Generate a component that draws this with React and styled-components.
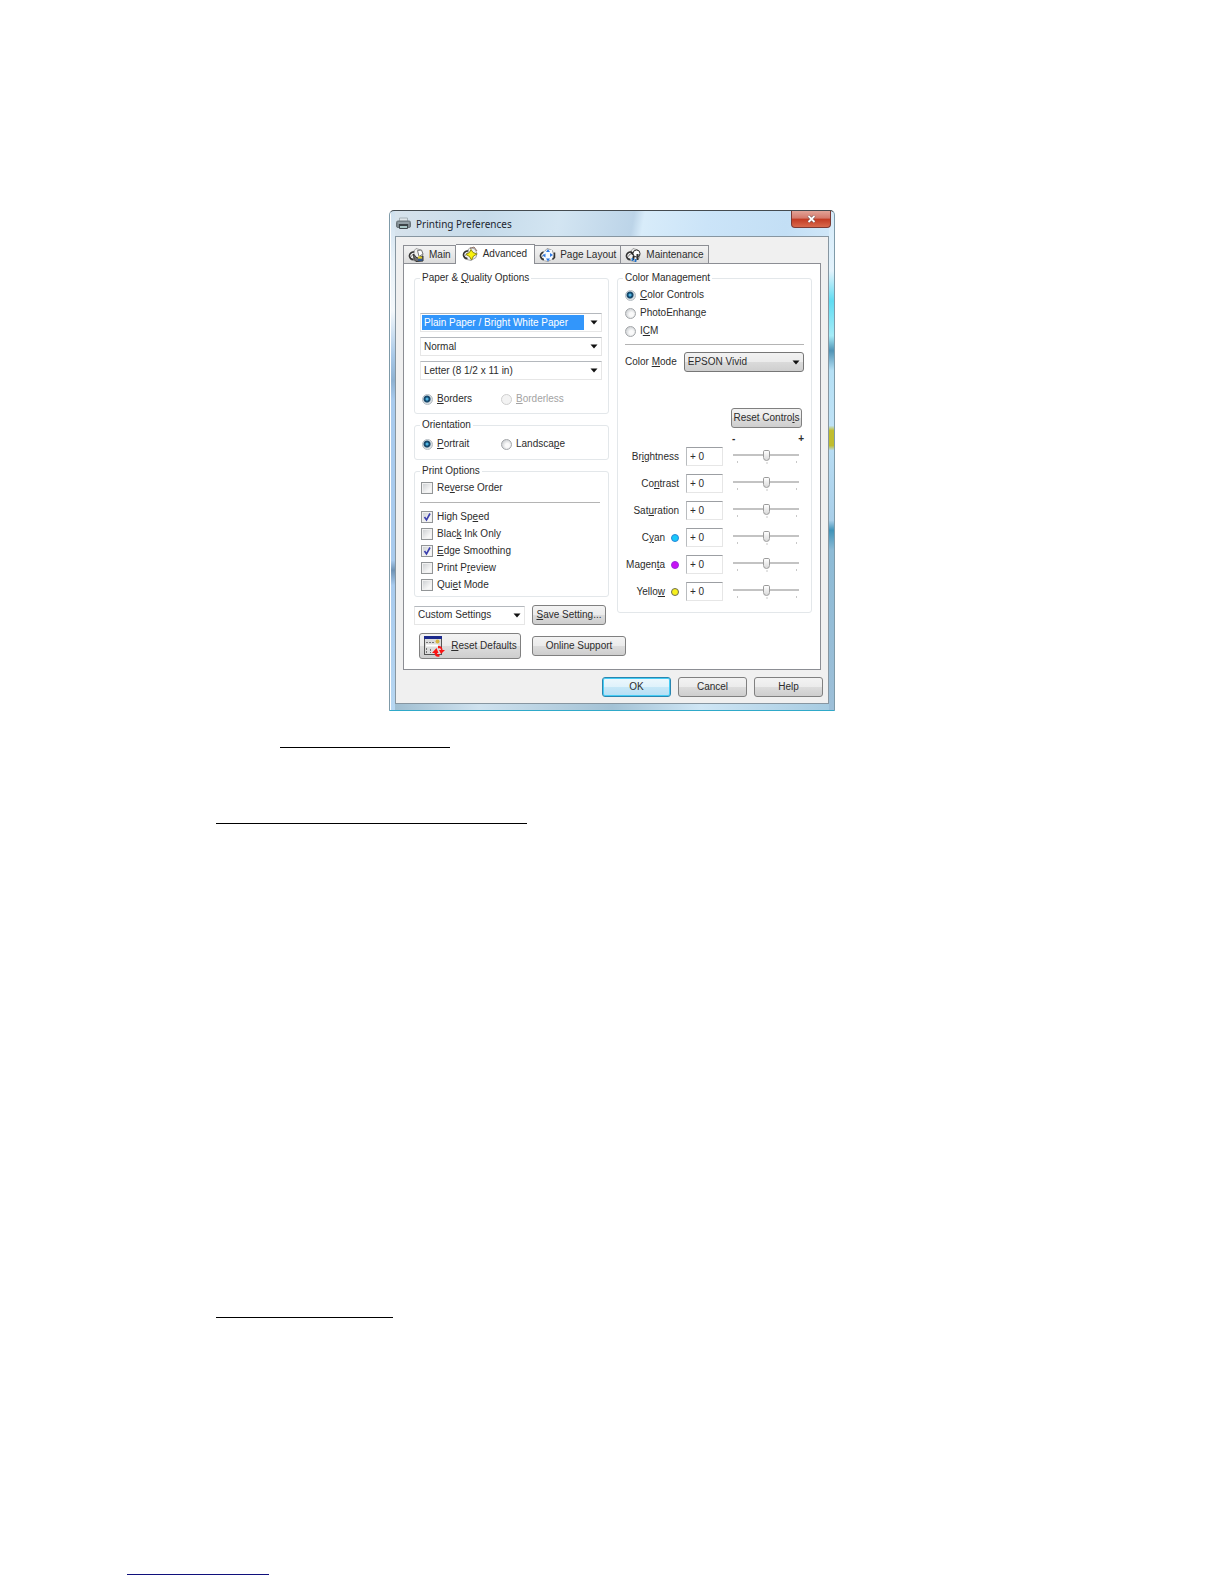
import React, { useState } from 'react';
import styled, { createGlobalStyle, css } from 'styled-components';

const GlobalStyle = createGlobalStyle`
  *, *::before, *::after {
    box-sizing: border-box;
  }
  body {
    margin: 0;
    background: #fff;
  }
  button, input, select {
    font: inherit;
    color: inherit;
    margin: 0;
  }
`;

const Page = styled.main`
  padding: 210px 0 8px;
  font-family: 'Liberation Sans', Arial, sans-serif;
  font-size: 10px;
  line-height: 14px;
  color: #2c2c2c;
`;

const Rule = styled.hr`
  width: ${({ $width }) => $width}px;
  height: 1px;
  margin: ${({ $top }) => $top}px 0 0 ${({ $left }) => $left}px;
  border: 0;
  background: ${({ $color }) => $color || '#000'};
`;

/* window frame */

const Dialog = styled.section`
  max-width: 446px;
  margin: 0 auto;
  padding: 0 5px 6px;
  border: 1px solid #7f9aa8;
  border-top-color: #444b50;
  border-bottom-color: #2fa9c9;
  border-radius: 5px 5px 1px 1px;
  background:
    linear-gradient(#fff, #fff) left top / 1px 100% no-repeat,
    linear-gradient(
      180deg,
      #d5ebfa 0%, #e4f3fc 12%, #5fdcf2 18%, #a5ecf8 25%, #4f93b5 28%, #b5e0f5 32%,
      #bfe2f6 43%, #c0bd2e 44%, #c0bd2e 47%, #b7dcf3 48%, #a9cfe9 62%, #3f93b8 64%,
      #8dbbd6 68%, #9dbfd8 100%
    ) right top / 5px 100% no-repeat,
    linear-gradient(
      180deg,
      #cfe0ee 0%, #e8f1f8 10%, #f4f8fb 20%, #a9c9e8 29%, #8fb2d2 34%, #a9cbee 38%,
      #a9cbee 70%, #6f93b5 72%, #a9cbee 75%, #b7d7f2 100%
    ) left top / 5px 100% no-repeat,
    linear-gradient(90deg, #9dbccf, #cfe2ef 20%, #a3c2d5 50%, #cfe6f5 70%, #a5cae0) left bottom / 100% 6px no-repeat,
    linear-gradient(
      100deg,
      #d8e3ec 0%, #c6dbea 18%, #d3e5f2 32%, #bcd4e8 46%, #d8ecfa 48%, #cbe4f8 60%, #c3dff5 75%,
      #d6ebfa 88%, #c3ddf0 100%
    );
`;

const TitleBar = styled.header`
  display: flex;
  align-items: center;
  gap: 5px;
  height: 25px;
  margin-right: -2px;
  padding-left: 1px;
`;

const Title = styled.h1`
  flex: 1;
  margin: 0;
  font-family: 'Noto Sans', 'Liberation Sans', sans-serif;
  font-size: 10px;
  font-weight: 400;
  line-height: 16px;
  color: #1c2630;
`;

const CloseButton = styled.button`
  display: flex;
  align-items: center;
  justify-content: center;
  align-self: flex-start;
  width: 40px;
  height: 17px;
  padding: 0;
  border: 1px solid #7c3a34;
  border-top: 0;
  border-radius: 0 0 4px 4px;
  background: linear-gradient(#e2a397, #d4796b 45%, #c23a22 50%, #d9694c);
`;

const Client = styled.div`
  padding: 7px 7px 6px;
  border: 1px solid #8796a1;
  background: #f0f0f0;
`;

/* tabs */

const TabList = styled.div`
  display: flex;
  align-items: flex-end;
  height: 19px;
`;

const Tab = styled.button`
  display: flex;
  align-items: center;
  gap: 4px;
  height: 18px;
  padding: 0 4px 0 4px;
  border: 1px solid #8c8e94;
  border-bottom: 0;
  border-left-width: ${({ $first }) => ($first ? 1 : 0)}px;
  background: linear-gradient(#f3f3f3, #e9e9e9 50%, #dcdcdc);
  white-space: nowrap;

  ${({ $active }) =>
    $active &&
    css`
      height: 20px;
      margin-bottom: -1px;
      padding: 0 7px 2px 6px;
      background: #fff;
      z-index: 1;
    `}
`;

const TabPanel = styled.div`
  padding: 7px 8px 10px 10px;
  border: 1px solid #8c8e94;
  background: #fff;
`;

const Columns = styled.div`
  display: grid;
  grid-template-columns: 1fr 1fr;
  align-items: start;
  gap: 8px;
`;

const Column = styled.div`
  display: flex;
  flex-direction: column;
  gap: 4px;
  min-width: 0;
`;

const Group = styled.fieldset`
  min-width: 0;
  margin: 0;
  padding: ${({ $pad }) => $pad};
  border: 1px solid #e3e7ea;
  border-radius: 3px;
`;

const Legend = styled.legend`
  padding: 0 2px;
`;

const Divider = styled.hr`
  height: 1px;
  margin: ${({ $margin }) => $margin};
  border: 0;
  background: #b4b4b4;
`;

/* drop-downs */

const SelectBox = styled.div`
  display: grid;
  align-items: center;
  flex: ${({ $width }) => ($width ? `0 0 ${$width}px` : '1')};

  > * {
    grid-area: 1 / 1;
  }
  > svg {
    justify-self: end;
    margin-right: 4px;
    pointer-events: none;
  }
`;

const SelectInput = styled.select`
  appearance: none;
  width: 100%;
  height: 19px;
  padding: 0 18px 0 3px;
  border: 1px solid #e6e6e6;
  border-top-color: #b4b8bd;
  border-radius: 0;
  background: #fff;
  outline: 0;

  ${({ $look }) =>
    $look === 'selected' &&
    css`
      color: #fff;
      background: linear-gradient(#3296fb, #3296fb) 1px 1px / calc(100% - 18px) calc(100% - 2px) no-repeat, #fff;
    `}
  ${({ $look }) =>
    $look === 'button' &&
    css`
      height: 20px;
      border-color: #777;
      border-radius: 3px;
      background: linear-gradient(#f2f2f2, #ebebeb 50%, #dadada 51%, #cfcfcf);
    `}
`;

const SelectStack = styled.div`
  display: grid;
  gap: 5px;
`;

/* radios and tick boxes */

const OptionRow = styled.div`
  display: grid;
  grid-template-columns: 79px 1fr;
  padding: ${({ $pad }) => $pad};
`;

const Option = styled.label`
  display: flex;
  align-items: center;
  gap: 4px;
  height: ${({ $height }) => $height || 14}px;
  padding-left: ${({ $indent }) => $indent || 0}px;
  color: ${({ $disabled }) => ($disabled ? '#a3a3a3' : 'inherit')};
`;

const Radio = styled.input`
  appearance: none;
  flex: none;
  width: 11px;
  height: 11px;
  border: 1px solid #a3a6a9;
  border-radius: 50%;
  background: radial-gradient(circle at 60% 60%, #fafafa 25%, #cfd2d5 75%);

  &:checked {
    border-color: #b4bcc2;
    background: radial-gradient(circle at 45% 45%, #4fb4e2 0 1px, #16496d 2px 3px, #d9dfe3 4px);
  }
  &:disabled {
    border-color: #cfcfcf;
    background: #f3f3f3;
  }
`;

const TickBox = styled.span`
  display: grid;
  flex: none;

  > * {
    grid-area: 1 / 1;
  }
  > svg {
    pointer-events: none;
  }
`;

const TickInput = styled.input`
  appearance: none;
  width: 12px;
  height: 12px;
  border: 1px solid #929597;
  background: linear-gradient(135deg, #c9cccf, #f6f6f6 70%);
  box-shadow: inset 0 0 0 1px #f1f1f1;
`;

/* buttons */

const Button = styled.button`
  display: flex;
  align-items: center;
  justify-content: center;
  gap: 6px;
  flex: none;
  width: ${({ $width }) => $width}px;
  height: ${({ $tall }) => ($tall ? 26 : 20)}px;
  padding: 0;
  border: 1px solid #808080;
  border-radius: 3px;
  background: linear-gradient(#f3f3f3, #ebebeb 50%, #dcdcdc 51%, #cecece);
  white-space: nowrap;

  ${({ $primary }) =>
    $primary &&
    css`
      border-color: #2a86b0;
      background: linear-gradient(#edf8fd, #dff2fb 50%, #c6e7f7 51%, #b5dff5);
      box-shadow: inset 0 0 0 1px #45cdf5;
    `}
`;

const SaveRow = styled.div`
  display: flex;
  align-items: center;
  gap: 7px;
  margin-top: 4px;
`;

const ResetRow = styled.div`
  display: flex;
  align-items: center;
  gap: 11px;
  padding: 8px 0 0 5px;
`;

const Footer = styled.footer`
  display: flex;
  justify-content: flex-end;
  gap: 7px;
  margin-right: -2px;
  padding-top: 7px;
`;

/* color controls */

const ModeRow = styled.div`
  display: flex;
  align-items: center;
  gap: 7px;
  padding-left: 2px;
`;

const ResetControls = styled.div`
  display: flex;
  justify-content: flex-end;
  padding: 36px 2px 0 0;
`;

const ScaleEnds = styled.div`
  display: flex;
  justify-content: space-between;
  width: 72px;
  margin: 6px 0 3px auto;
  font-weight: 700;
  line-height: 10px;
`;

const Sliders = styled.div`
  display: grid;
  gap: 8px;
  padding-right: 5px;
`;

const SliderRow = styled.div`
  display: grid;
  grid-template-columns: 1fr 40px 66px;
  align-items: center;
  column-gap: 7px;
  height: 19px;
`;

const SliderLabel = styled.label`
  display: flex;
  align-items: center;
  justify-content: flex-end;
  gap: 6px;
`;

const Dot = styled.span`
  width: 8px;
  height: 8px;
  border: 1px solid ${({ $edge }) => $edge};
  border-radius: 50%;
  background: ${({ $fill }) => $fill};
`;

const ValueInput = styled.input`
  width: 37px;
  height: 19px;
  padding: 0 3px;
  border: 1px solid #e6e6e6;
  border-top-color: #9c9fa3;
  border-left-color: #b9bcbf;
  background: #fff;
`;

const SliderBox = styled.div`
  display: grid;
  justify-items: center;
`;

const Range = styled.input`
  appearance: none;
  width: 100%;
  height: 12px;
  background: linear-gradient(#c3c3c3, #c3c3c3) center / 100% 2px no-repeat;

  &::-webkit-slider-thumb {
    appearance: none;
    width: 7px;
    height: 11px;
    border: 1px solid #9b9b9b;
    border-radius: 2px 2px 4px 4px;
    background: linear-gradient(#fff, #d9d9d9);
  }
`;

const Caret = () => (
  <svg width="8" height="5" viewBox="0 0 8 5" aria-hidden="true">
    <path d="M0.500 0.500h7L4 4.500z" fill="#111" />
  </svg>
);

const Tick = () => (
  <svg width="12" height="12" viewBox="0 0 12 12" aria-hidden="true">
    <path d="M3.500 6l2 3L9 2.500" fill="none" stroke="#3b3fae" strokeWidth="1.600" />
  </svg>
);

const Ticks = () => (
  <svg width="64" height="3" viewBox="0 0 64 3" aria-hidden="true">
    <path d="M3.500 0v2M33 1v2M62.500 0v2" stroke="#c8c8c8" />
  </svg>
);

const PrinterIcon = () => (
  <svg width="15" height="13" viewBox="0 0 15 13" aria-hidden="true">
    <path d="M3.500 5V1h8v4" fill="#dfe6ea" stroke="#a5b0b7" />
    <rect x="0.500" y="4" width="14" height="6.500" rx="1.500" fill="#7d888e" stroke="#69747a" />
    <path d="M2 6h11" stroke="#a8b5bc" />
    <path d="M3.500 7.500h8v4h-8z" fill="#a9c6c6" stroke="#3e474c" />
    <path d="M3 8h9" stroke="#3b4347" strokeWidth="2" />
  </svg>
);

// printer body shared by all four tab icons
const TabIcon = ({ children }) => (
  <svg width="17" height="16" viewBox="0 0 17 16" aria-hidden="true">
    <path d="M1.500 7.500L6 4l2-2.500L13 3l2 4.500-1 4-5 3-6-1.500z" fill="#f1f1f1" stroke="#8f8f8f" strokeWidth="0.800" />
    <path d="M6.500 5C3.500 4.500 1 7 1.500 9.500c.5 2 2.500 3 4 3" fill="none" stroke="#333" strokeWidth="1.500" />
    <path d="M3.500 9.500c.5-2 2-2.500 3-2.500" fill="none" stroke="#666" />
    {children}
  </svg>
);

const MainIcon = () => (
  <TabIcon>
    <path d="M5.500 7l3.500 4 6-2v5l-7 .5-2-2z" fill="#6f6f6f" stroke="#333" />
    <path d="M9.500 3.500l4-.5 1.500 4-4 2.500z" fill="#fff" stroke="#777" />
    <path d="M10 10.500h4" stroke="#e2cf24" strokeWidth="2" />
    <path d="M10 13h4.500" stroke="#24539a" strokeWidth="1.500" />
  </TabIcon>
);

const AdvancedIcon = () => (
  <TabIcon>
    <path
      d="M9 3.500L11 6.500l4 1.500-3.500 2-2 4-2-3.500L4 8.500l3.500-2z"
      fill="#fbf30d"
      stroke="#8f8a10"
    />
    <path d="M8 2.500l4-1.500 3 4" fill="none" stroke="#8b6c60" />
  </TabIcon>
);

const LayoutIcon = () => (
  <TabIcon>
    <path d="M4.500 4.500L13 2.500v10l-8 1z" fill="#f7fbff" />
    <path d="M9 2l2 3H7zM9 14.500l2-3H7zM3.500 8.500l3-2v4zM14 8l-3-2v4z" fill="#2f7ae5" />
    <path d="M15.500 5.500v5l-2 2" fill="none" stroke="#333" strokeWidth="1.500" />
  </TabIcon>
);

const MaintenanceIcon = () => (
  <TabIcon>
    <path d="M6 5l3 3-1 5" fill="none" stroke="#222" strokeWidth="2" />
    <circle cx="11.500" cy="6.500" r="3.500" fill="#fff" stroke="#333" />
    <path d="M12.500 7v6" stroke="#333" strokeWidth="2" />
    <path d="M7.500 11v3M10.500 12v3" stroke="#2373c8" strokeWidth="1.800" />
  </TabIcon>
);

const ResetIcon = () => (
  <svg width="22" height="22" viewBox="0 0 22 22" aria-hidden="true">
    <rect x="1.500" y="1.500" width="17" height="18" fill="#dcdcdc" stroke="#555" />
    <rect x="1" y="1" width="18" height="3" fill="#1c2a8c" />
    <path d="M3 7.500h9M3.500 13v6M7.500 14v4" stroke="#777" strokeDasharray="2 1" />
    <path d="M3 10.500h12" stroke="#fff" strokeWidth="2" />
    <circle cx="14.500" cy="6.500" r="2" fill="#d8b642" />
    <path d="M15 11c3-.5 4.500 1.500 4.500 4H22l-4 4-2-4h2c0-1.500-1-2-3-1.500z" fill="#fa1414" />
    <path d="M16.500 21.500c-3 .8-5-.8-5-3.500H9l4.500-5 2 5h-1.500c0 1 1 2 2.500 1.500z" fill="#fa1414" />
  </svg>
);

const CloseIcon = () => (
  <svg width="9" height="8" viewBox="0 0 9 8" aria-hidden="true">
    <path d="M1.500 1l6 6M7.500 1l-6 6" stroke="#6d4a48" strokeWidth="3" />
    <path d="M1.500 1l6 6M7.500 1l-6 6" stroke="#fff" strokeWidth="1.800" />
  </svg>
);

const tabs = [
  { id: 'main', label: 'Main', Icon: MainIcon },
  { id: 'advanced', label: 'Advanced', Icon: AdvancedIcon },
  { id: 'layout', label: 'Page Layout', Icon: LayoutIcon },
  { id: 'maintenance', label: 'Maintenance', Icon: MaintenanceIcon },
];

const printOptions = [
  { id: 'speed', label: <>High Sp<u>e</u>ed</>, checked: true },
  { id: 'black', label: <>Blac<u>k</u> Ink Only</> },
  { id: 'edge', label: <><u>E</u>dge Smoothing</>, checked: true },
  { id: 'preview', label: <>Print P<u>r</u>eview</> },
  { id: 'quiet', label: <>Qui<u>e</u>t Mode</> },
];

const sliders = [
  { id: 'brightness', label: <>Br<u>i</u>ghtness</> },
  { id: 'contrast', label: <>Co<u>n</u>trast</> },
  { id: 'saturation', label: <>Sat<u>u</u>ration</> },
  { id: 'cyan', label: <>C<u>y</u>an</>, fill: '#19c8fa', edge: '#2a86d8' },
  { id: 'magenta', label: <>Magen<u>t</u>a</>, fill: '#c812f5', edge: '#9a2be0' },
  { id: 'yellow', label: <>Yello<u>w</u></>, fill: '#f7f01c', edge: '#6d6d58' },
];

const Select = ({ label, options, look, width }) => (
  <SelectBox $width={width}>
    <SelectInput aria-label={label} $look={look}>
      {options.map((option) => (
        <option key={option}>{option}</option>
      ))}
    </SelectInput>
    <Caret />
  </SelectBox>
);

const RadioOption = ({ name, children, height, indent, disabled, defaultChecked }) => (
  <Option $height={height} $indent={indent} $disabled={disabled}>
    <Radio type="radio" name={name} disabled={disabled} defaultChecked={defaultChecked} />
    <span>{children}</span>
  </Option>
);

const CheckOption = ({ children, defaultChecked }) => {
  const [checked, setChecked] = useState(Boolean(defaultChecked));
  return (
    <Option $height={17} $indent={1}>
      <TickBox>
        <TickInput type="checkbox" checked={checked} onChange={(e) => setChecked(e.target.checked)} />
        {checked && <Tick />}
      </TickBox>
      <span>{children}</span>
    </Option>
  );
};

const ColorSlider = ({ id, label, fill, edge }) => {
  const [value, setValue] = useState(0);
  const text = value < 0 ? `- ${-value}` : `+ ${value}`;
  return (
    <SliderRow>
      <SliderLabel htmlFor={id}>
        <span>{label}</span>
        {fill && <Dot $fill={fill} $edge={edge} />}
      </SliderLabel>
      <ValueInput id={id} value={text} readOnly />
      <SliderBox>
        <Range
          type="range"
          aria-label={id}
          min="-25"
          max="25"
          value={value}
          onChange={(e) => setValue(Number(e.target.value))}
        />
        <Ticks />
      </SliderBox>
    </SliderRow>
  );
};

const App = () => {
  const [activeTab, setActiveTab] = useState('advanced');

  return (
    <Page>
      <GlobalStyle />
      <Dialog aria-label="Printing Preferences">
        <TitleBar>
          <PrinterIcon />
          <Title>Printing Preferences</Title>
          <CloseButton type="button" aria-label="Close">
            <CloseIcon />
          </CloseButton>
        </TitleBar>

        <Client>
          <TabList role="tablist">
            {tabs.map(({ id, label, Icon }, i) => (
              <Tab
                key={id}
                type="button"
                role="tab"
                aria-selected={activeTab === id}
                $active={activeTab === id}
                $first={i === 0}
                onClick={() => setActiveTab(id)}
              >
                <Icon />
                {label}
              </Tab>
            ))}
          </TabList>

          <TabPanel role="tabpanel">
            <Columns>
              <Column>
                <Group $pad="28px 6px 7px 5px">
                  <Legend>Paper &amp; <u>Q</u>uality Options</Legend>
                  <SelectStack>
                    <Select label="Paper type" look="selected" options={['Plain Paper / Bright White Paper']} />
                    <Select label="Quality" options={['Normal']} />
                    <Select label="Paper size" options={['Letter (8 1/2 x 11 in)']} />
                  </SelectStack>
                  <OptionRow $pad="12px 0 0 2px">
                    <RadioOption name="borders" defaultChecked><u>B</u>orders</RadioOption>
                    <RadioOption name="borders" disabled><u>B</u>orderless</RadioOption>
                  </OptionRow>
                </Group>

                <Group $pad="5px 6px 8px 5px">
                  <Legend>Orientation</Legend>
                  <OptionRow $pad="0 0 0 2px">
                    <RadioOption name="orientation" defaultChecked><u>P</u>ortrait</RadioOption>
                    <RadioOption name="orientation">Landsca<u>p</u>e</RadioOption>
                  </OptionRow>
                </Group>

                <Group $pad="1px 6px 3px 5px">
                  <Legend>Print Options</Legend>
                  <CheckOption>Re<u>v</u>erse Order</CheckOption>
                  <Divider $margin="6px 2px 5px 0" />
                  {printOptions.map(({ id, label, checked }) => (
                    <CheckOption key={id} defaultChecked={checked}>{label}</CheckOption>
                  ))}
                </Group>

                <SaveRow>
                  <Select label="Custom Settings" width={111} options={['Custom Settings']} />
                  <Button type="button" $width={74}><span><u>S</u>ave Setting...</span></Button>
                </SaveRow>
              </Column>

              <Group $pad="1px 7px 11px 5px">
                <Legend>Color Management</Legend>
                <RadioOption name="color" height={18} indent={2} defaultChecked><u>C</u>olor Controls</RadioOption>
                <RadioOption name="color" height={18} indent={2}>PhotoEnhan<u>g</u>e</RadioOption>
                <RadioOption name="color" height={18} indent={2}>I<u>C</u>M</RadioOption>
                <Divider $margin="4px 0 7px 2px" />
                <ModeRow>
                  <span>Color <u>M</u>ode</span>
                  <Select label="Color Mode" look="button" options={['EPSON Vivid']} />
                </ModeRow>
                <ResetControls>
                  <Button type="button" $width={71}><span>Reset Contro<u>l</u>s</span></Button>
                </ResetControls>
                <ScaleEnds>
                  <span>-</span>
                  <span>+</span>
                </ScaleEnds>
                <Sliders>
                  {sliders.map((slider) => (
                    <ColorSlider key={slider.id} {...slider} />
                  ))}
                </Sliders>
              </Group>
            </Columns>

            <ResetRow>
              <Button type="button" $width={102} $tall>
                <ResetIcon />
                <span><u>R</u>eset Defaults</span>
              </Button>
              <Button type="button" $width={94}>Online Support</Button>
            </ResetRow>
          </TabPanel>

          <Footer>
            <Button type="button" $width={69} $primary>OK</Button>
            <Button type="button" $width={69}>Cancel</Button>
            <Button type="button" $width={69}>Help</Button>
          </Footer>
        </Client>
      </Dialog>

      <Rule $width={170} $left={280} $top={36} />
      <Rule $width={311} $left={216} $top={75} />
      <Rule $width={177} $left={216} $top={493} />
      <Rule $width={142} $left={127} $top={256} $color="#10107c" />
    </Page>
  );
};

export default App;
